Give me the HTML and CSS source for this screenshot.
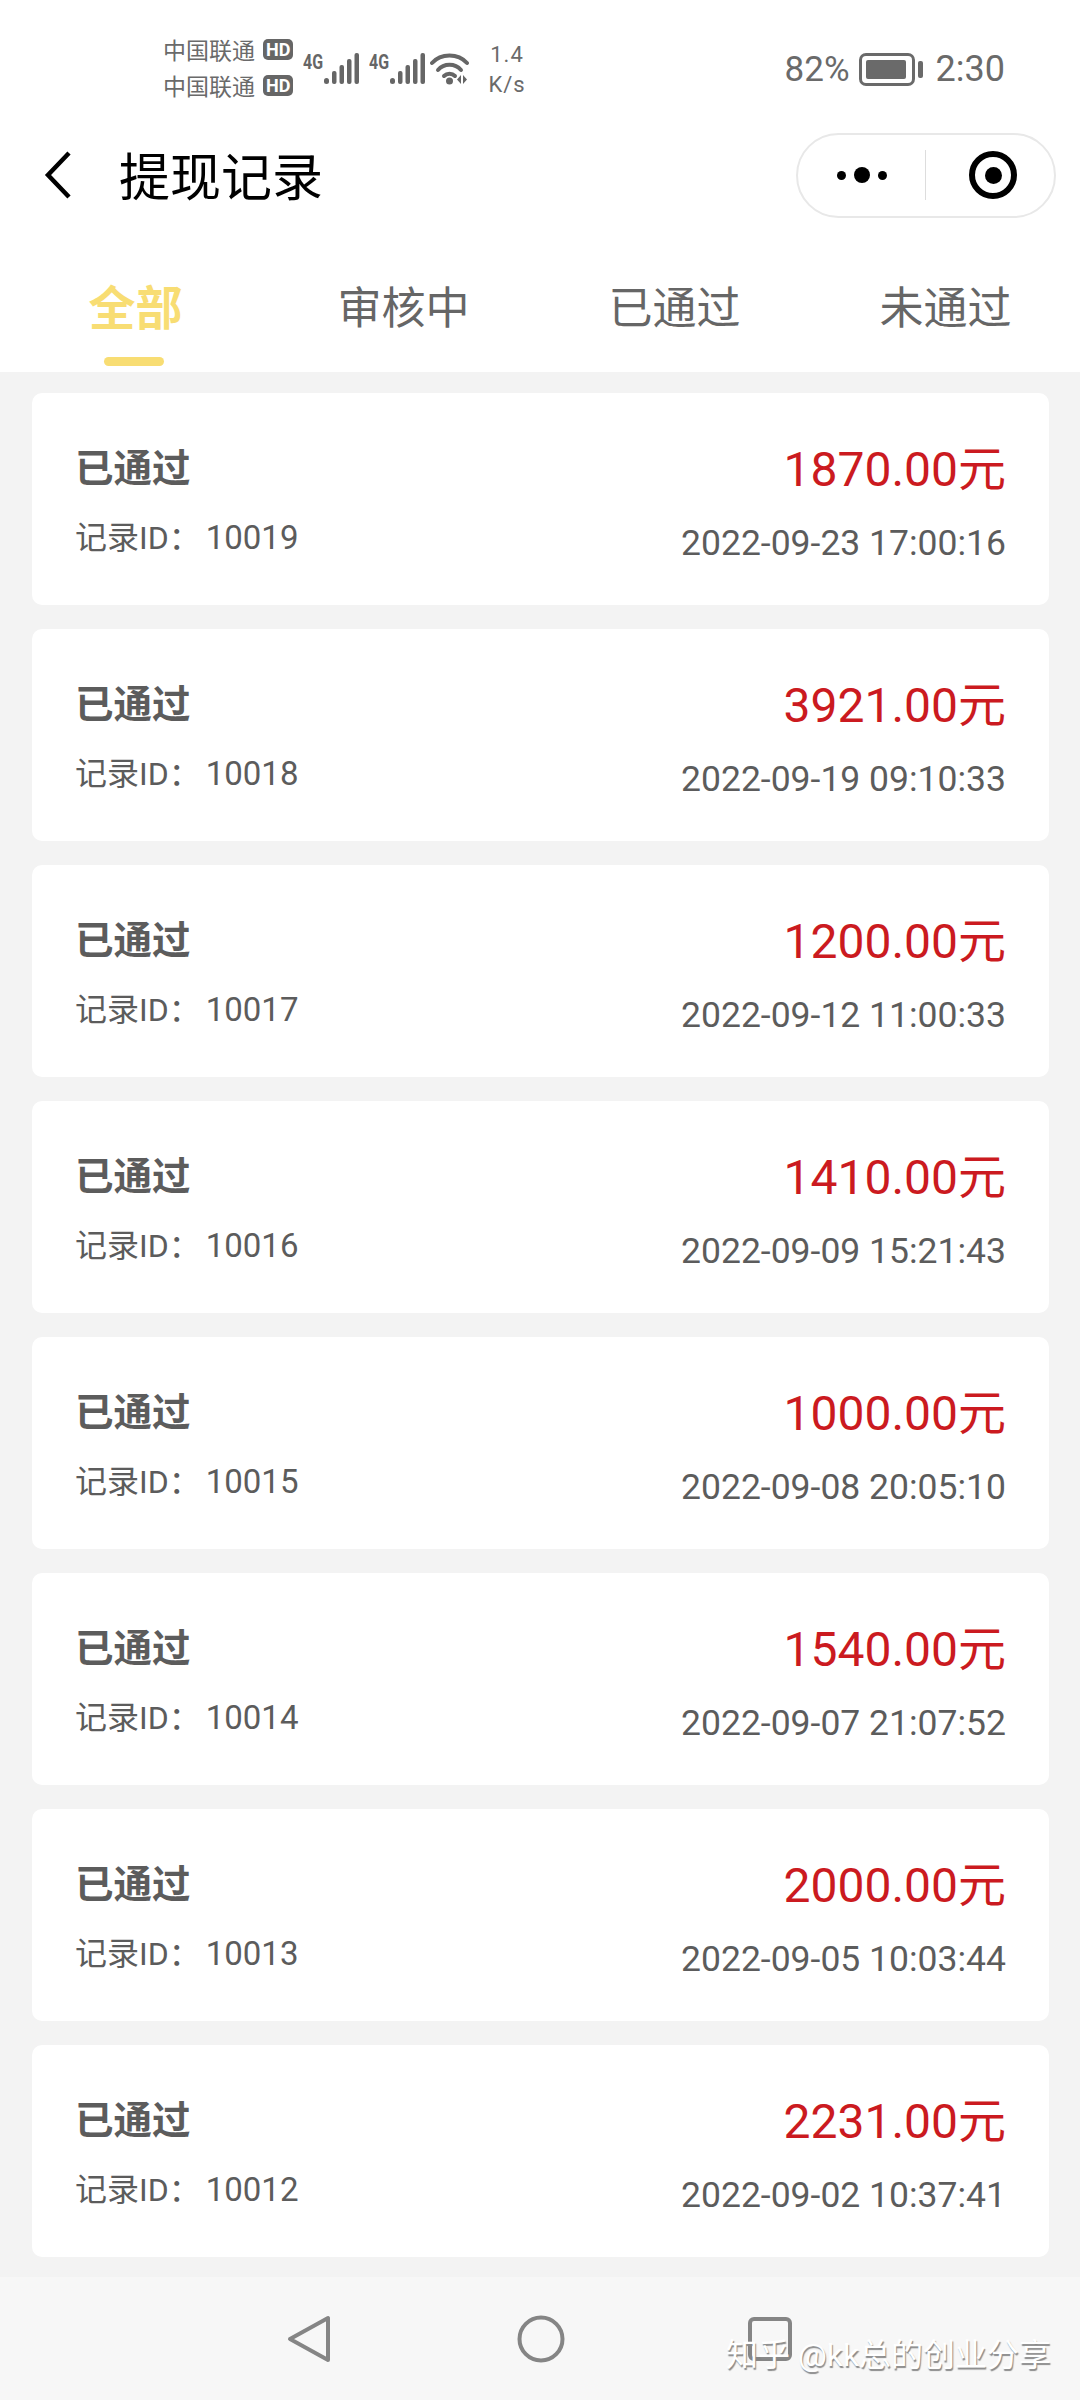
FILE: index.html
```html
<!DOCTYPE html>
<html lang="zh-CN">
<head>
    <meta charset="UTF-8">
    <title>提现记录</title>
    <link rel="stylesheet" href="styles.css">
</head>
<body>

<header class="top">
    <!-- status bar -->
    <div class="status-bar">
        <div class="carriers">
            <div class="carrier"><span>中国联通</span><b class="hd">HD</b></div>
            <div class="carrier"><span>中国联通</span><b class="hd">HD</b></div>
        </div>
        <svg class="signal" width="62" height="34" viewBox="0 0 62 34">
            <text x="0" y="18" textLength="20" lengthAdjust="spacingAndGlyphs" class="net">4G</text>
            <g fill="#666">
                <rect x="21" y="27" width="5" height="6" rx="2.5"/>
                <rect x="29" y="20" width="4.5" height="13" rx="2"/>
                <rect x="36.5" y="14" width="4.5" height="19" rx="2"/>
                <rect x="44" y="8" width="4.5" height="25" rx="2"/>
                <rect x="51.5" y="2" width="4.5" height="31" rx="2"/>
            </g>
        </svg>
        <svg class="signal signal-2" width="62" height="34" viewBox="0 0 62 34">
            <text x="0" y="18" textLength="20" lengthAdjust="spacingAndGlyphs" class="net">4G</text>
            <g fill="#666">
                <rect x="21" y="27" width="5" height="6" rx="2.5"/>
                <rect x="29" y="20" width="4.5" height="13" rx="2"/>
                <rect x="36.5" y="14" width="4.5" height="19" rx="2"/>
                <rect x="44" y="8" width="4.5" height="25" rx="2"/>
                <rect x="51.5" y="2" width="4.5" height="31" rx="2"/>
            </g>
        </svg>
        <svg class="wifi" width="40" height="34" viewBox="0 0 40 34">
            <g fill="none" stroke="#666" stroke-width="4" stroke-linecap="round">
                <path d="M2 12C11 2 28 2 37 12"/>
                <path d="M8 19C14 12 25 12 31 19"/>
                <path d="M14 25C17 22 22 22 25 25"/>
            </g>
            <circle cx="19.5" cy="30" r="3.5" fill="#666"/>
            <path d="M31 24v9l-4-4.500zM33 24v9l4-4.500z" fill="#666"/>
        </svg>
        <div class="speed">
            <span>1.4</span>
            <span>K/s</span>
        </div>
        <div class="status-right">
            <span>82%</span>
            <div class="battery"><div class="battery-fill"></div></div>
            <div class="battery-nub"></div>
            <span class="clock">2:30</span>
        </div>
    </div>

    <!-- title bar -->
    <div class="title-bar">
        <svg class="back" width="28" height="48" viewBox="0 0 28 48">
            <path d="M25 2L4 24l21 22" fill="none" stroke="#000" stroke-width="4.500"/>
        </svg>
        <h1 class="title">提现记录</h1>
        <div class="capsule">
            <div class="capsule-left">
                <i class="dot"></i><i class="dot dot-big"></i><i class="dot"></i>
            </div>
            <div class="capsule-line"></div>
            <div class="capsule-right">
                <div class="target"><div class="target-in"></div></div>
            </div>
        </div>
    </div>

    <!-- tabs -->
    <nav class="tabs">
        <div class="tab tab-active">全部<div class="tab-line"></div></div>
        <div class="tab">审核中</div>
        <div class="tab">已通过</div>
        <div class="tab">未通过</div>
    </nav>
</header>

<main class="list">
    <div class="card">
        <div class="card-left"><div class="state">已通过</div><div class="record">记录ID：<span class="record-no">10019</span></div></div>
        <div class="card-right"><div class="amount">1870.00元</div><div class="date">2022-09-23 17:00:16</div></div>
    </div>
    <div class="card">
        <div class="card-left"><div class="state">已通过</div><div class="record">记录ID：<span class="record-no">10018</span></div></div>
        <div class="card-right"><div class="amount">3921.00元</div><div class="date">2022-09-19 09:10:33</div></div>
    </div>
    <div class="card">
        <div class="card-left"><div class="state">已通过</div><div class="record">记录ID：<span class="record-no">10017</span></div></div>
        <div class="card-right"><div class="amount">1200.00元</div><div class="date">2022-09-12 11:00:33</div></div>
    </div>
    <div class="card">
        <div class="card-left"><div class="state">已通过</div><div class="record">记录ID：<span class="record-no">10016</span></div></div>
        <div class="card-right"><div class="amount">1410.00元</div><div class="date">2022-09-09 15:21:43</div></div>
    </div>
    <div class="card">
        <div class="card-left"><div class="state">已通过</div><div class="record">记录ID：<span class="record-no">10015</span></div></div>
        <div class="card-right"><div class="amount">1000.00元</div><div class="date">2022-09-08 20:05:10</div></div>
    </div>
    <div class="card">
        <div class="card-left"><div class="state">已通过</div><div class="record">记录ID：<span class="record-no">10014</span></div></div>
        <div class="card-right"><div class="amount">1540.00元</div><div class="date">2022-09-07 21:07:52</div></div>
    </div>
    <div class="card">
        <div class="card-left"><div class="state">已通过</div><div class="record">记录ID：<span class="record-no">10013</span></div></div>
        <div class="card-right"><div class="amount">2000.00元</div><div class="date">2022-09-05 10:03:44</div></div>
    </div>
    <div class="card">
        <div class="card-left"><div class="state">已通过</div><div class="record">记录ID：<span class="record-no">10012</span></div></div>
        <div class="card-right"><div class="amount">2231.00元</div><div class="date">2022-09-02 10:37:41</div></div>
    </div>
</main>

<footer class="nav-bar">
    <svg width="44" height="48" viewBox="0 0 44 48">
        <path d="M41 3v42L3 24z" fill="none" stroke="#858585" stroke-width="4" stroke-linejoin="round"/>
    </svg>
    <svg class="nav-circle" width="48" height="48" viewBox="0 0 48 48">
        <circle cx="24" cy="24" r="21.500" fill="none" stroke="#858585" stroke-width="4"/>
    </svg>
    <svg width="44" height="44" viewBox="0 0 44 44">
        <rect x="2" y="2" width="40" height="40" rx="4" fill="none" stroke="#858585" stroke-width="4"/>
    </svg>
    <div class="watermark">知乎 @kk总的创业分享</div>
</footer>

</body>
</html>
```

FILE: styles.css
```css
* {
  box-sizing: border-box;
}

body {
  margin: 0;
  width: 1080px;
  height: 2400px;
  overflow: hidden;
  background-color: #f3f3f3;
  font-family: Roboto, "Noto Sans CJK SC", sans-serif;
  color: #5c5c5c;
}

.top {
  height: 372px;
  background-color: #fff;
}

/* status bar */
.status-bar {
  display: flex;
  align-items: flex-start;
  height: 128px;
  padding: 31px 0 0 163px;
  color: #6a6a6a;
}

.carriers {
  width: 140px;
}

.carrier {
  display: flex;
  align-items: center;
  height: 36px;
  font-size: 23px;
}

.hd {
  margin-left: 8px;
  padding: 0 3px;
  height: 21px;
  line-height: 21px;
  border-radius: 5px;
  background-color: #666;
  color: #fff;
  font-size: 18px;
}

.signal {
  margin-top: 20px;
}

.signal-2 {
  margin-left: 4px;
}

.net {
  font-family: Roboto, sans-serif;
  font-size: 20px;
  font-weight: 700;
  fill: #666;
}

.wifi {
  margin: 20px 0 0 -1px;
}

.speed {
  display: flex;
  flex-direction: column;
  align-items: center;
  width: 40px;
  margin: 9px 0 0 17px;
  font-size: 22px;
  line-height: 30px;
  letter-spacing: 1px;
}

.status-right {
  display: flex;
  align-items: center;
  margin: 0 0 0 auto;
  padding: 6px 75px 0 0;
  height: 70px;
  font-size: 35px;
}

.battery {
  width: 56px;
  height: 33px;
  margin-left: 9px;
  padding: 4px;
  border: 3px solid #6a6a6a;
  border-radius: 7px;
}

.battery-fill {
  height: 100%;
  width: 40px;
  background-color: #6a6a6a;
  border-radius: 2px;
}

.battery-nub {
  width: 5px;
  height: 17px;
  margin-left: 3px;
  background-color: #6a6a6a;
  border-radius: 2px;
}

.clock {
  margin-left: 13px;
  font-size: 36px;
}

/* title bar */
.title-bar {
  display: flex;
  align-items: center;
  height: 94px;
  padding: 0 24px 0 44px;
}

.back {
  flex: none;
}

.title {
  margin: 0 0 3px 47px;
  font-size: 51px;
  font-weight: 400;
  color: #000;
}

.capsule {
  display: flex;
  align-items: center;
  width: 260px;
  height: 85px;
  margin-left: auto;
  border: 2px solid #e8e8e8;
  border-radius: 43px;
}

.capsule-left {
  display: flex;
  align-items: center;
  justify-content: center;
  gap: 8px;
  width: 127px;
}

.dot {
  width: 9px;
  height: 9px;
  border-radius: 50%;
  background-color: #000;
}

.dot-big {
  width: 16px;
  height: 16px;
}

.capsule-line {
  width: 1px;
  height: 50px;
  background-color: #ddd;
}

.capsule-right {
  flex: 1;
  display: flex;
  justify-content: center;
  padding-left: 6px;
}

.target {
  display: flex;
  align-items: center;
  justify-content: center;
  width: 48px;
  height: 48px;
  border: 6px solid #000;
  border-radius: 50%;
}

.target-in {
  width: 17px;
  height: 17px;
  border-radius: 50%;
  background-color: #000;
}

/* tabs */
.tabs {
  display: grid;
  grid-template-columns: repeat(4, 271px);
  margin: 0 0 0 -3px;
  padding-top: 58px;
}

.tab {
  position: relative;
  height: 58px;
  line-height: 58px;
  text-align: center;
  font-size: 44px;
  color: #666;
}

.tab-active {
  padding-left: 6px;
  font-size: 47px;
  font-weight: 700;
  color: #f8dd73;
}

.tab-line {
  position: absolute;
  left: 107px;
  top: 77px;
  width: 60px;
  height: 9px;
  border-radius: 5px;
  background-color: #f8dd73;
}

/* record list */
.list {
  height: 1905px;
  padding: 21px 31px 0 32px;
}

.card {
  display: flex;
  justify-content: space-between;
  height: 212px;
  margin-bottom: 24px;
  padding: 50px 43px 0 43px;
  background-color: #fff;
  border-radius: 10px;
}

.state {
  height: 52px;
  line-height: 52px;
  font-size: 38.5px;
  font-weight: 700;
}

.record {
  height: 40px;
  line-height: 40px;
  margin-top: 23px;
  font-size: 32px;
}

.record-no {
  margin-left: 5px;
  font-size: 33px;
}

.card-right {
  text-align: right;
}

.amount {
  height: 54px;
  line-height: 54px;
  font-size: 48px;
  color: #cb1a20;
}

.date {
  height: 40px;
  line-height: 40px;
  margin-top: 26px;
  font-size: 35.5px;
}

/* bottom nav */
.nav-bar {
  position: relative;
  display: flex;
  align-items: center;
  height: 123px;
  padding: 0 0 0 287px;
  background-color: #f7f7f7;
}

.nav-circle {
  margin: 0 183px 0 186px;
}

.watermark {
  position: absolute;
  left: 726px;
  top: 56px;
  font-size: 32px;
  line-height: 44px;
  color: #fff;
  text-shadow: 1px 2px 1px #8a8a8a;
}
```
